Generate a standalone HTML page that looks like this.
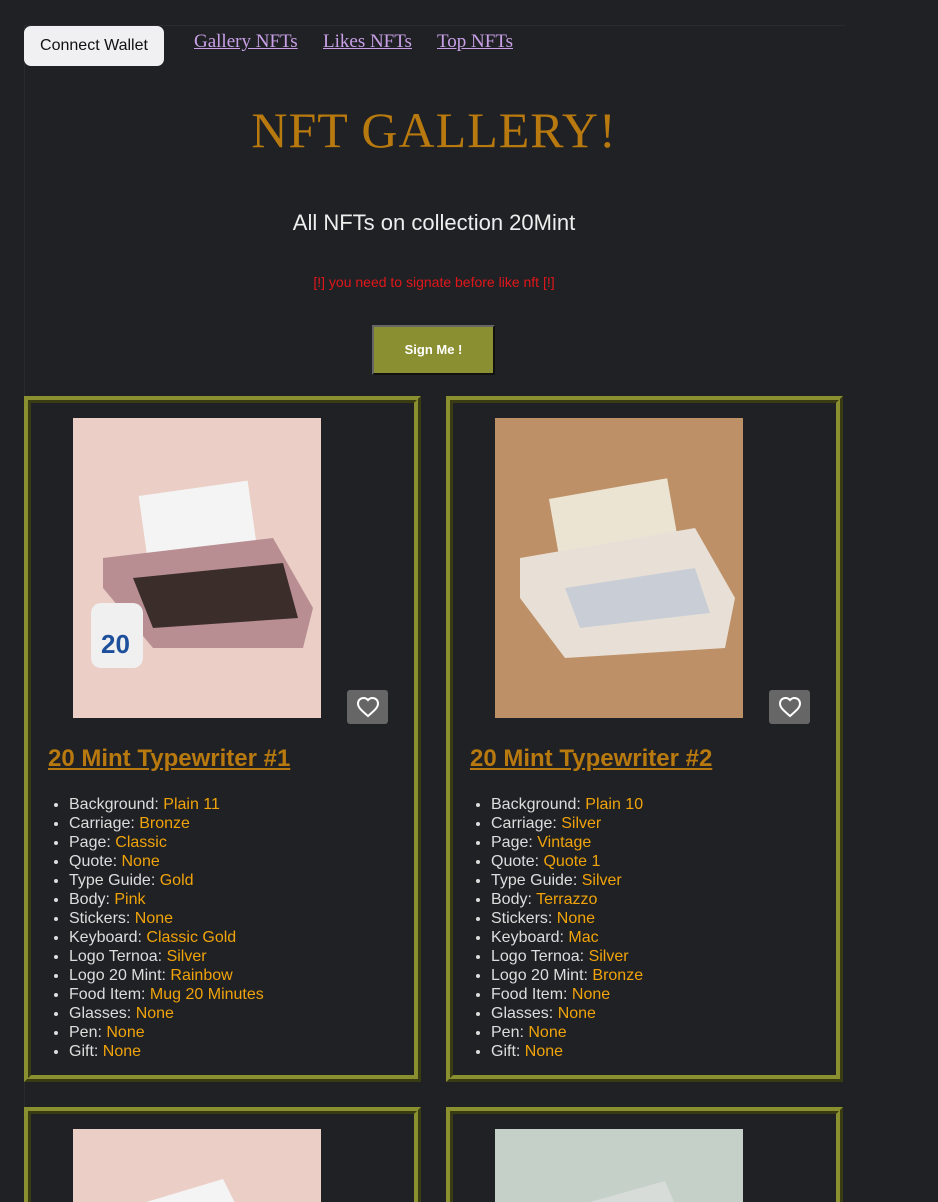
<!DOCTYPE html>
<html><head><meta charset="utf-8"><style>
html,body{margin:0;padding:0;background:#202124;width:938px;height:1202px;overflow:hidden;font-family:"Liberation Sans",sans-serif;}
#root{position:relative;width:938px;height:1202px;overflow:hidden;}
.wrap{position:absolute;left:24px;top:25px;width:820px;height:1176px;border-left:1px solid #2a2b2e;border-top:1px solid #2a2b2e;}
.cw{position:absolute;left:24px;top:26px;width:140px;height:40px;background:#f0f0f2;border-radius:7px;color:#111;font-size:16px;line-height:40px;text-align:center;}
.nav{position:absolute;top:31px;font-family:"Liberation Serif",serif;font-size:19px;color:#c9a0e8;text-decoration:underline;}
h1{position:absolute;left:0;width:868px;top:101px;margin:0;text-align:center;font-family:"Liberation Serif",serif;font-weight:normal;font-size:50px;color:#b8790f;letter-spacing:1px;}
.sub{position:absolute;left:0;width:868px;top:210px;text-align:center;color:#eee;font-size:22px;}
.warn{position:absolute;left:0;width:868px;top:274px;text-align:center;color:#e0161b;font-size:14px;}
.sign{position:absolute;left:372px;top:325px;width:119px;height:46px;background:#8a8f31;border:2px solid;border-color:#666 #111 #111 #666;color:#fff;font-size:13px;font-weight:bold;text-align:center;line-height:46px;}
.card{position:absolute;width:383px;height:672px;border:7px ridge #8a8f30;background:#202124;}
.img{position:absolute;left:42px;top:15px;width:248px;height:300px;}
.heart{position:absolute;left:316px;top:287px;width:41px;height:34px;background:#666;border-radius:3px;}
.heart svg{position:absolute;left:9px;top:5px;}
.title{position:absolute;left:17px;top:342px;font-size:24px;font-weight:bold;color:#b8790f;text-decoration:underline;}
ul{position:absolute;left:0;top:392px;margin:0;padding-left:38px;color:#ddd;font-size:16px;line-height:19px;}
ul span{color:#f0a30a;}
</style></head><body><div id="root">
<div class="wrap"></div>
<div class="cw">Connect Wallet</div>
<div class="nav" style="left:194px">Gallery NFTs</div>
<div class="nav" style="left:323px">Likes NFTs</div>
<div class="nav" style="left:437px">Top NFTs</div>
<h1>NFT GALLERY!</h1>
<div class="sub">All NFTs on collection 20Mint</div>
<div class="warn">[!] you need to signate before like nft [!]</div>
<div class="sign">Sign Me !</div>

<div class="card" style="left:24px;top:396px">
 <div class="img" style="background:#ebcfc6">
  <svg width="248" height="300"><rect x="70" y="70" width="110" height="70" fill="#f4f4f4" transform="rotate(-8 125 105)"/><path d="M30 140 L200 120 L240 190 L230 230 L80 230 L30 170Z" fill="#b88e92"/><path d="M60 160 L210 145 L225 200 L80 210Z" fill="#3a2d2a"/><rect x="18" y="185" width="52" height="65" rx="10" fill="#f0f0f0"/><text x="28" y="235" font-size="26" font-weight="bold" fill="#1d4f9b">20</text></svg>
 </div>
 <div class="heart"><svg width="24" height="24" viewBox="0 0 24 24"><path d="M12 21l-1.5-1.3C5 15 2 12.3 2 8.5 2 5.4 4.4 3 7.5 3c1.7 0 3.4.8 4.5 2.1C13.1 3.8 14.8 3 16.5 3 19.6 3 22 5.4 22 8.5c0 3.8-3 6.5-8.5 11.2z" fill="none" stroke="#fff" stroke-width="2"/></svg></div>
 <div class="title">20 Mint Typewriter #1</div>
 <ul><li>Background: <span>Plain 11</span></li><li>Carriage: <span>Bronze</span></li><li>Page: <span>Classic</span></li><li>Quote: <span>None</span></li><li>Type Guide: <span>Gold</span></li><li>Body: <span>Pink</span></li><li>Stickers: <span>None</span></li><li>Keyboard: <span>Classic Gold</span></li><li>Logo Ternoa: <span>Silver</span></li><li>Logo 20 Mint: <span>Rainbow</span></li><li>Food Item: <span>Mug 20 Minutes</span></li><li>Glasses: <span>None</span></li><li>Pen: <span>None</span></li><li>Gift: <span>None</span></li></ul>
</div>

<div class="card" style="left:446px;top:396px">
 <div class="img" style="background:#be9068">
  <svg width="248" height="300"><rect x="60" y="70" width="120" height="80" fill="#ebe4d2" transform="rotate(-10 120 110)"/><path d="M25 140 L200 110 L240 180 L230 230 L70 240 L25 180Z" fill="#e8e0d6"/><path d="M70 170 L200 150 L215 195 L85 210Z" fill="#c9ced6"/></svg>
 </div>
 <div class="heart"><svg width="24" height="24" viewBox="0 0 24 24"><path d="M12 21l-1.5-1.3C5 15 2 12.3 2 8.5 2 5.4 4.4 3 7.5 3c1.7 0 3.4.8 4.5 2.1C13.1 3.8 14.8 3 16.5 3 19.6 3 22 5.4 22 8.5c0 3.8-3 6.5-8.5 11.2z" fill="none" stroke="#fff" stroke-width="2"/></svg></div>
 <div class="title">20 Mint Typewriter #2</div>
 <ul><li>Background: <span>Plain 10</span></li><li>Carriage: <span>Silver</span></li><li>Page: <span>Vintage</span></li><li>Quote: <span>Quote 1</span></li><li>Type Guide: <span>Silver</span></li><li>Body: <span>Terrazzo</span></li><li>Stickers: <span>None</span></li><li>Keyboard: <span>Mac</span></li><li>Logo Ternoa: <span>Silver</span></li><li>Logo 20 Mint: <span>Bronze</span></li><li>Food Item: <span>None</span></li><li>Glasses: <span>None</span></li><li>Pen: <span>None</span></li><li>Gift: <span>None</span></li></ul>
</div>

<div class="card" style="left:24px;top:1107px;height:95px;border-bottom-width:0">
 <div class="img" style="background:#ebcfc6;height:80px;overflow:hidden"><svg width="248" height="80"><path d="M50 80 L150 50 L165 80Z" fill="#f4f4f4"/></svg></div>
</div>
<div class="card" style="left:446px;top:1107px;height:95px;border-bottom-width:0">
 <div class="img" style="background:#c5d0c9;height:80px;overflow:hidden"><svg width="248" height="80"><path d="M70 80 L170 52 L182 80Z" fill="#d8dcd8"/></svg></div>
</div>
</div></body></html>
